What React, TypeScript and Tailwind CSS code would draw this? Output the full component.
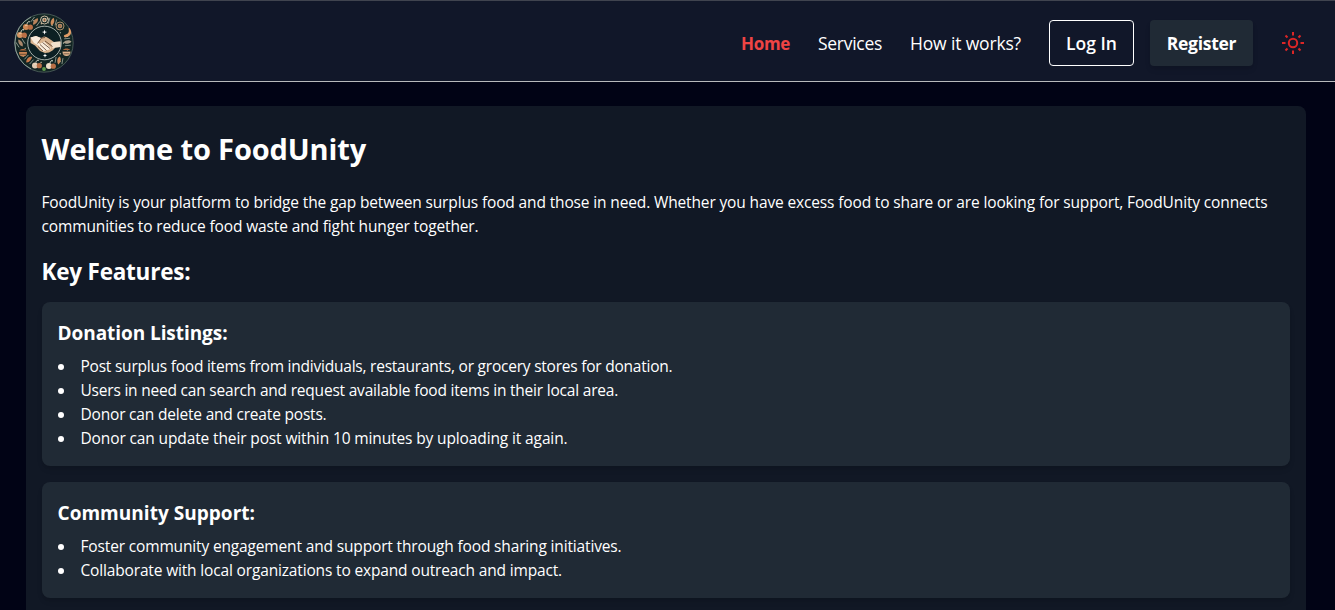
const FOOD = [
  { x: 30.5, y: 7, c: '#d9c9ae', k: 'plate' },
  { x: 21.5, y: 8.5, c: '#b9825a', k: 'leaf' },
  { x: 14, y: 13, c: '#d08a55', k: 'fruit' },
  { x: 8, y: 21, c: '#d59663', k: 'fruit' },
  { x: 6.5, y: 30, c: '#a8866a', k: 'leaf' },
  { x: 9, y: 39, c: '#c98453', k: 'bowl' },
  { x: 15, y: 46.5, c: '#c9794c', k: 'leaf' },
  { x: 23, y: 51.5, c: '#e2cdb4', k: 'fruit' },
  { x: 30, y: 56, c: '#5f9a4e', k: 'dot' },
  { x: 37, y: 52, c: '#ecdcc6', k: 'fruit' },
  { x: 45, y: 47.5, c: '#d28b59', k: 'leaf' },
  { x: 52.5, y: 38.5, c: '#e0b48c', k: 'bowl' },
  { x: 53.5, y: 29, c: '#a99d8b', k: 'leaf' },
  { x: 54, y: 20, c: '#e09c66', k: 'banana' },
  { x: 46, y: 13, c: '#b99673', k: 'plate' },
  { x: 38.5, y: 8.5, c: '#cf8e5d', k: 'leaf' },
];

const SPECKS = Array.from({ length: 60 }, (_, i) => {
  const a = i * 0.857;
  const r = 19.5 + ((i * 5) % 10);
  return { x: 30 + r * Math.cos(a), y: 30 + r * Math.sin(a), c: i % 3 ? '#7d9186' : '#d7b48f' };
});

function Logo() {
  return (
    <svg className="h-[60px] w-[60px]" viewBox="0 0 60 60" fill="none">
      <circle cx="30" cy="30" r="29.2" fill="#122523" stroke="#5d7069" strokeWidth="0.7" />
      <path d="M17 4A29 29 0 0 0 17 56" stroke="#9aa9a2" strokeWidth="0.9" />
      {SPECKS.map((s, i) => (
        <circle key={i} cx={s.x} cy={s.y} r="0.6" fill={s.c} />
      ))}
      {FOOD.map((f, i) => (
        <g key={i} transform={`translate(${f.x} ${f.y})`}>
          {f.k === 'plate' && (
            <>
              <circle r="4" stroke={f.c} strokeWidth="0.9" />
              <circle r="2.3" fill={f.c} />
              <path d="M-1.500 0h3M0 -1.500v3" stroke="#8d5434" strokeWidth="0.8" />
            </>
          )}
          {f.k === 'fruit' && (
            <>
              <circle cx="-2" cy="1" r="3" fill={f.c} />
              <circle cx="2.300" cy="1.200" r="2.600" fill="#b96f45" />
              <path d="M-1 -2c0-2 2-3 3-2" stroke="#dfe3d4" strokeWidth="0.9" />
              <path d="M-3 0c1-1 2-1 2.500 0" stroke="#f6e3cc" strokeWidth="0.7" />
            </>
          )}
          {f.k === 'leaf' && (
            <g transform={`rotate(${i * 37})`}>
              <path d="M0 -4c2.500 2 2 6 0 8c-2-2-2.500-6 0-8z" fill={f.c} />
              <path d="M-3.500 -3v6M3.500 -3v6" stroke="#98a297" strokeWidth="0.8" />
            </g>
          )}
          {f.k === 'bowl' && (
            <>
              <path d="M-4 0h8c0 3-1.500 4.500-4 4.500s-4-1.500-4-4.500z" fill={f.c} />
              <path d="M-3.500 -1.500c1-2 6-2 7 0z" fill="#ad663d" />
              <path d="M-4 -.5h8M-3 2.300h6" stroke="#2c2a22" strokeWidth="0.6" />
            </>
          )}
          {f.k === 'banana' && <path d="M1.500 -5c3 4 2 8-4 9.500c-2-.5-2-2-1-2.500c4-1 5-3 4-6.500z" fill={f.c} />}
          {f.k === 'dot' && <circle r="1.9" fill={f.c} />}
        </g>
      ))}
      <circle cx="30.500" cy="30" r="16.800" fill="#0c2023" stroke="#c9d0ca" strokeWidth="0.8" />
      <path d="M30.500 16.500l.6 2 2 .6-2 .6-.6 2-.6-2-2-.6 2-.6zM31 40.200l.6 1.700 1.700.6-1.700.6-.6 1.700-.6-1.700-1.700-.6 1.700-.6z" fill="#fff" />
      <path d="M16.500 24.500l5.500-1.500 5 2 3-1.500c3 0 7 3.500 10 5.500l6.500-.500v5.500l-5 .5-3 3-3.500 2-4 .5-5-2-5-5.500-4.500-2.500z" fill="#d9b48f" />
      <path d="M16.500 24.500l5.500-1.500 5 2-3 4.500 1.500 1.500 4.500-2.500 7 6.500-1.500 1.500-6.500 2-4.500-6-4.500-2.500z" fill="#f8ecdc" />
      <path d="M37 30l3-1 6.500-.500v5.500l-5 .5-3 1z" fill="#f3e2cc" />
      <path d="M23.500 30.500l4-5.500 3.500-.5M31 28l7.500 5.500M28.500 29.500l7.500 6M26 31.500l6.500 6M24 33.500l5 4.500" stroke="#5b3d2b" strokeWidth="0.8" />
    </svg>
  );
}

function Sun() {
  return (
    <svg className="h-6 w-6" viewBox="0 0 24 24" fill="none" stroke="#dc2626" strokeWidth="2">
      <circle cx="12" cy="12" r="4.200" />
      <path d="M12 1v3.500M12 19.500v3.500M1 12h3.500M19.500 12h3.500M4.500 4.500l2 2M17.500 17.500l2 2M4.500 19.500l2-2M17.500 6.500l2-2" />
    </svg>
  );
}

type Line = { text: string; tracking: string };

function Feature({ title, tracking, items }: { title: string; tracking: string; items: Line[] }) {
  return (
    <section className="rounded-lg bg-[#202a35] p-4 pl-[15.5px] shadow-md">
      <h3 className={`mb-[7px] pt-px text-[19px] leading-7 font-bold ${tracking}`}>{title}</h3>
      <ul>
        {items.map((item) => (
          <li key={item.text} className="flex h-6 items-center">
            <span className="mt-0.5 mr-[17px] h-1.5 w-1.5 rounded-full bg-white" />
            <span className={`whitespace-nowrap ${item.tracking}`}>{item.text}</span>
          </li>
        ))}
      </ul>
    </section>
  );
}

const DONATION: Line[] = [
  { text: 'Post surplus food items from individuals, restaurants, or grocery stores for donation.', tracking: 'tracking-[-0.226px]' },
  { text: 'Users in need can search and request available food items in their local area.', tracking: 'tracking-[-0.207px]' },
  { text: 'Donor can delete and create posts.', tracking: 'tracking-[-0.192px]' },
  { text: 'Donor can update their post within 10 minutes by uploading it again.', tracking: 'tracking-[-0.126px]' },
];

const COMMUNITY: Line[] = [
  { text: 'Foster community engagement and support through food sharing initiatives.', tracking: 'tracking-[-0.152px]' },
  { text: 'Collaborate with local organizations to expand outreach and impact.', tracking: 'tracking-[-0.159px]' },
];

export default function App() {
  return (
    <div className="h-[610px] overflow-hidden bg-[#010315] font-['Open_Sans','Noto_Sans',sans-serif] text-[15.5px] leading-6 text-white">
      <header className="flex h-[82px] items-center justify-between border-t border-b border-t-[#40444f] border-b-[#b8babd] bg-[#111729] pr-[30px] pl-3.5">
        <div className="pt-1">
          <Logo />
        </div>
        <nav className="flex items-center pt-1 text-[17.5px] whitespace-nowrap">
          <a className="w-[77px] pt-0.5 text-[17px] font-bold tracking-[-0.3px] text-[#ef4444]">Home</a>
          <a className="w-[92px] tracking-[-0.285px]">Services</a>
          <a className="w-[139px] tracking-[-0.159px]">How it works?</a>
          <button className="mr-4 flex h-[46px] w-[85px] items-center justify-center rounded border border-white font-semibold">Log In</button>
          <button className="mr-7 flex h-[46px] w-[103px] items-center justify-center rounded bg-[#202a35] font-bold tracking-[-0.275px] shadow-md">Register</button>
          <Sun />
        </nav>
      </header>
      <main className="mt-6 ml-[26px] h-[600px] w-[1280px] rounded-lg bg-[#111825] p-4">
        <h1 className="-ml-[0.5px] pt-[9px] text-[29px] leading-9 font-bold tracking-[-0.135px]">Welcome to FoodUnity</h1>
        <p className="mt-[23px] -ml-[0.5px] whitespace-nowrap">
          <span className="block tracking-[-0.14px]">
            FoodUnity is your platform to bridge the gap between surplus food and those in need. Whether you have excess food to share or are looking for support, FoodUnity connects
          </span>
          <span className="block tracking-[-0.135px]">communities to reduce food waste and fight hunger together.</span>
        </p>
        <h2 className="mt-[18px] mb-[14px] -ml-[0.5px] text-[22.5px] leading-8 font-bold tracking-[-0.22px]">Key Features:</h2>
        <div className="flex flex-col gap-4">
          <Feature title="Donation Listings:" tracking="tracking-[-0.063px]" items={DONATION} />
          <Feature title="Community Support:" tracking="tracking-[0.028px]" items={COMMUNITY} />
        </div>
      </main>
    </div>
  );
}
